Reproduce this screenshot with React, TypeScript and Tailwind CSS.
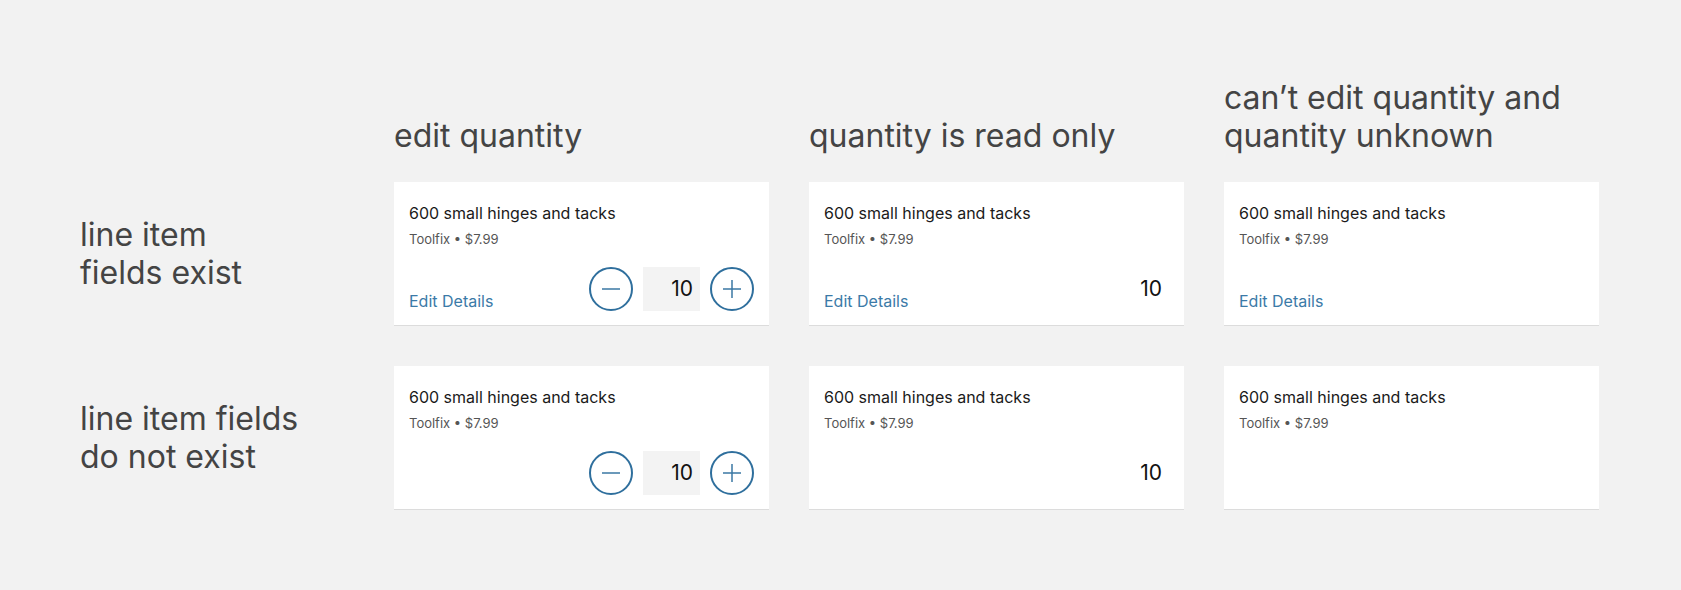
type Variant = {
  stepper?: boolean;
  readOnly?: boolean;
  link?: boolean;
};

function CircleButton({ kind }: { kind: 'minus' | 'plus' }) {
  return (
    <button className="flex h-11 w-11 items-center justify-center rounded-full border-2 border-[#2f6f9d] bg-white">
      <svg width="20" height="20" viewBox="0 0 20 20" fill="none" stroke="#3a77a3" strokeWidth="1.5">
        <line x1="1" y1="10" x2="19" y2="10" />
        {kind === 'plus' && <line x1="10" y1="1" x2="10" y2="19" />}
      </svg>
    </button>
  );
}

function Qty({ filled }: { filled: boolean }) {
  return (
    <div
      className={
        filled
          ? 'flex h-11 w-[57px] items-center justify-end bg-[#f3f3f3] pr-[7px] text-[21px] text-[#111]'
          : 'flex h-11 w-[57px] items-center justify-end pr-[7px] text-[21px] text-[#111]'
      }
    >
      10
    </div>
  );
}

function LineItem({ stepper, readOnly, link }: Variant) {
  const hasFooter = stepper || readOnly || link;
  return (
    <div className="flex h-[144px] flex-col border-b border-[#dcdcdc] bg-white px-[15px] pb-[14px] pt-[19px]">
      <p className="text-[16px] leading-6 text-[#1a1a1a]">600 small hinges and tacks</p>
      <p className="mt-[4px] text-[13px] leading-5 text-[#555]">Toolfix • $7.99</p>
      {hasFooter && (
        <div className="mt-auto flex h-11 items-end justify-between">
          {link ? (
            <a className="text-[16px] leading-5 text-[#3b7aa7]">Edit Details</a>
          ) : (
            <span />
          )}
          {stepper && (
            <div className="flex items-center gap-[10px]">
              <CircleButton kind="minus" />
              <Qty filled />
              <CircleButton kind="plus" />
            </div>
          )}
          {readOnly && <Qty filled={false} />}
        </div>
      )}
    </div>
  );
}

const rows = [
  {
    label: ['line item', 'fields exist'],
    items: [
      { stepper: true, link: true },
      { readOnly: true, link: true },
      { link: true },
    ],
  },
  {
    label: ['line item fields', 'do not exist'],
    items: [{ stepper: true }, { readOnly: true }, {}],
  },
];

export default function App() {
  return (
    <div
      className="min-h-screen bg-[#f2f2f2] pl-[80px] pt-[79px]"
      style={{ fontFamily: 'Inter, "Noto Sans", sans-serif' }}
    >
      <div className="grid grid-cols-[274px_375px_375px_375px] items-end gap-x-10 text-[32px] leading-[38px] text-[#444]">
        <div />
        <h2 className="font-normal">edit quantity</h2>
        <h2 className="font-normal">quantity is read only</h2>
        <h2 className="font-normal">
          can’t edit quantity and
          <br />
          quantity unknown
        </h2>
      </div>
      <div className="mt-[27px] grid grid-cols-[274px_375px_375px_375px] gap-x-10 gap-y-10">
        {rows.map((row) => (
          <div key={row.label[0]} className="contents">
            <div className="flex items-center text-[32px] leading-[38px] text-[#444]">
              <p>
                {row.label[0]}
                <br />
                {row.label[1]}
              </p>
            </div>
            {row.items.map((item, i) => (
              <LineItem key={i} {...item} />
            ))}
          </div>
        ))}
      </div>
    </div>
  );
}
